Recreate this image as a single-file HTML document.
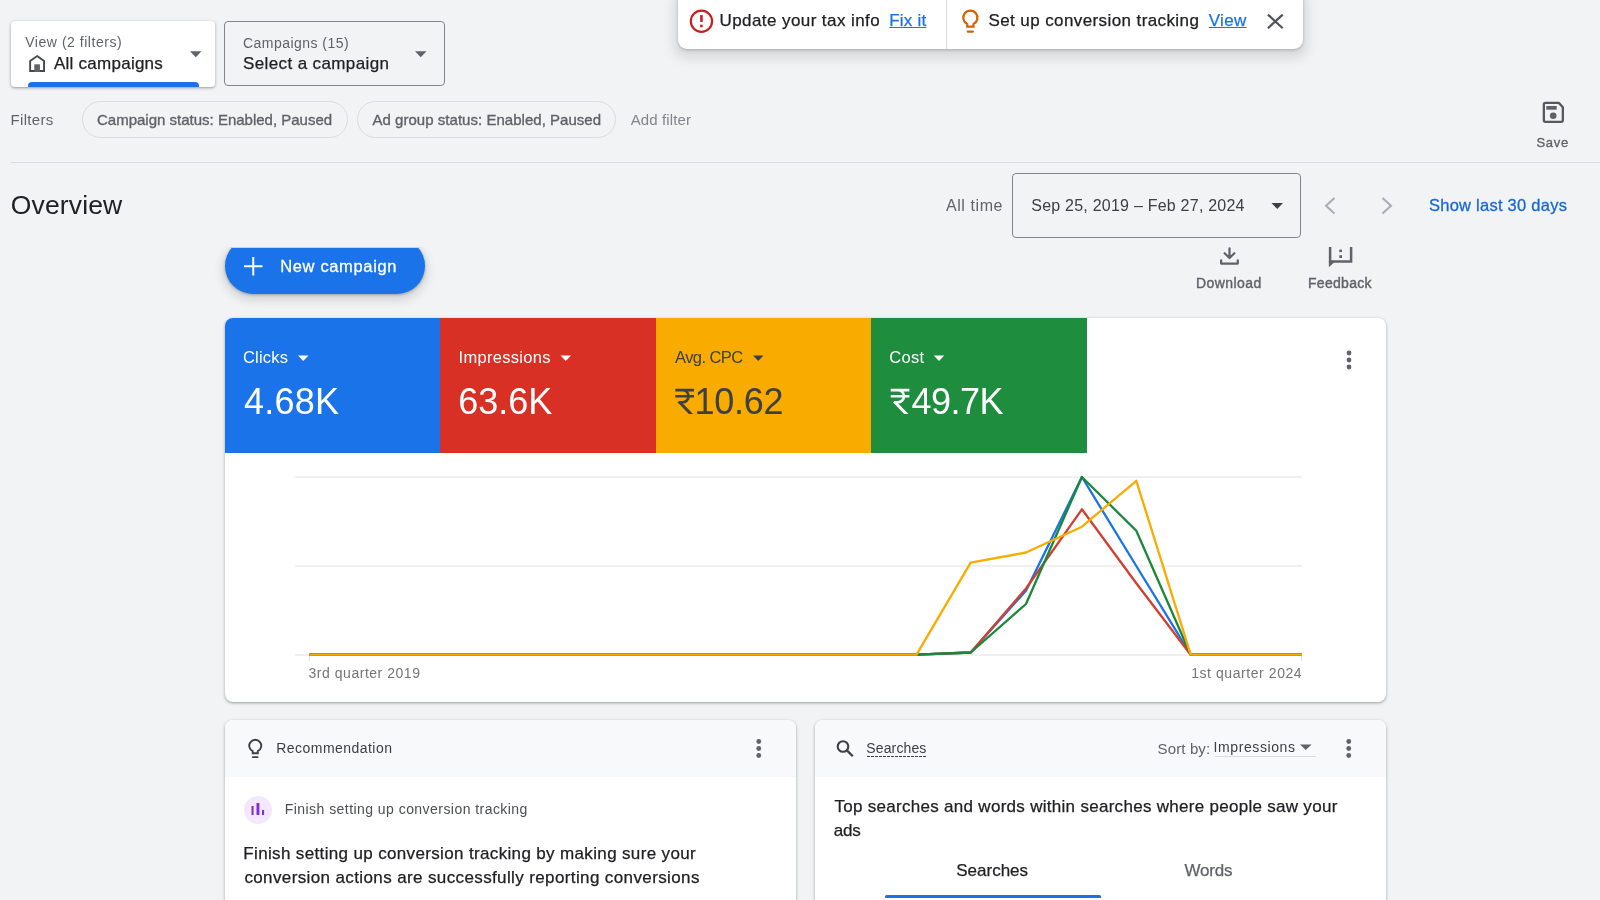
<!DOCTYPE html>
<html><head><meta charset="utf-8">
<style>
*{box-sizing:border-box;margin:0;padding:0}
html,body{width:1600px;height:900px;overflow:hidden;background:#f1f3f4;font-family:"Liberation Sans",sans-serif;color:#202124}
.a{position:absolute;white-space:nowrap;line-height:1}
.tx{position:absolute;left:0;top:0;width:1600px;height:900px;will-change:transform}
svg{position:absolute;left:0;top:0;overflow:visible}
.card{background:#fff;border-radius:8px;box-shadow:0 1px 2px rgba(60,64,67,.3),0 1px 3px 1px rgba(60,64,67,.15);overflow:hidden}
</style></head><body>

<!-- view selector -->
<div class="a" style="left:11px;top:21px;width:204px;height:65.600px;background:#fff;border-radius:4px;box-shadow:0 1px 2px rgba(60,64,67,.3),0 1px 3px 1px rgba(60,64,67,.15);overflow:hidden">
  <div class="a" style="left:16.5px;top:61px;width:171px;height:8px;background:#1a73e8;border-radius:4px 4px 0 0"></div>
</div>
<!-- campaign selector -->
<div class="a" style="left:224.200px;top:21.200px;width:221px;height:65px;border:1px solid #80868b;border-radius:4px"></div>

<!-- notification bar -->
<div class="a" style="left:677.5px;top:-10px;width:625.5px;height:59px;background:#fff;border-radius:9px;box-shadow:0 1px 3px rgba(60,64,67,.3),0 5px 12px 4px rgba(60,64,67,.15)"></div>
<div class="a" style="left:946px;top:0;width:1px;height:49px;background:#dadce0"></div>

<!-- filters -->
<div class="a" style="left:81.5px;top:101px;width:266.5px;height:36.5px;border:1px solid #dadce0;border-radius:18.5px"></div>
<div class="a" style="left:357px;top:101px;width:258.5px;height:36.5px;border:1px solid #dadce0;border-radius:18.5px"></div>
<div class="a" style="left:11px;top:161.5px;width:1589px;height:1px;background:#dadce0"></div>

<!-- date box -->
<div class="a" style="left:1012.200px;top:172.500px;width:289.300px;height:65px;border:1px solid #80868b;border-radius:4px"></div>

<!-- new campaign button (clipped) -->
<div class="a" style="left:205px;top:247px;width:260px;height:70px;overflow:hidden">
  <div class="a" style="left:19.5px;top:-9.500px;width:200px;height:56px;border-radius:28px;background:#1a73e8;box-shadow:0 1px 3px rgba(60,64,67,.4),0 4px 8px 3px rgba(60,64,67,.15)"></div>
</div>

<div class="a" style="left:231.500px;top:247px;width:186px;height:1px;background:rgba(255,255,255,.7)"></div>
<!-- main card -->
<div class="a card" style="left:225px;top:318px;width:1160.700px;height:383.500px">
  <div class="a" style="left:0;top:0;width:215px;height:135px;background:#1a73e8"></div>
  <div class="a" style="left:215px;top:0;width:215.5px;height:135px;background:#d93025"></div>
  <div class="a" style="left:430.5px;top:0;width:215.5px;height:135px;background:#f9ab00"></div>
  <div class="a" style="left:646px;top:0;width:215.5px;height:135px;background:#1e8e3e"></div>
</div>

<!-- recommendation card -->
<div class="a card" style="left:225px;top:720px;width:570.800px;height:200px">
  <div class="a" style="left:0;top:0;width:572px;height:56.5px;background:#f8f9fa"></div>
</div>
<div class="a" style="left:243.5px;top:795.5px;width:28px;height:28px;border-radius:14px;background:#f3e8fd"></div>

<!-- searches card -->
<div class="a card" style="left:815px;top:720px;width:570.700px;height:200px">
  <div class="a" style="left:0;top:0;width:572px;height:56.5px;background:#f8f9fa"></div>
  <div class="a" style="left:70px;top:175px;width:215.500px;height:3px;background:#1a73e8;border-radius:1.5px 1.5px 0 0"></div>
</div>
<div class="a" style="left:867px;top:755.5px;width:60px;height:1px;background:repeating-linear-gradient(90deg,#3c4043 0 3px,transparent 3px 4px)"></div>
<div class="a" style="left:1214.5px;top:756px;width:101.5px;height:1px;background:#dadce0"></div>

<!-- all vector icons + chart -->
<svg width="1600" height="900" viewBox="0 0 1600 900">
  <!-- dropdown arrows -->
  <g fill="#5f6368">
    <path d="M190 51.200h11.500l-5.750 6z"/>
    <path d="M415 51.200h11.500l-5.750 6z"/>
    <path d="M1271.500 203h11.500l-5.750 6z" fill="#3c4043"/>
    <path d="M1300 744.500h11.500l-5.750 5.600z" fill="#5f6368"/>
  </g>
  <g fill="#fff">
    <path d="M298 355.500h10.500l-5.250 5.500z"/>
    <path d="M560.500 355.500h10.500l-5.250 5.500z"/>
    <path d="M753 355.500h10.500l-5.250 5.500z" fill="#3c4043"/>
    <path d="M933.750 355.500h10.500l-5.250 5.500z"/>
  </g>
  <!-- home icon -->
  <path d="M37.100 56.100L44.050 61.050V71.050H30.150V61.050Z" fill="none" stroke="#45484c" stroke-width="1.900"/>
  <rect x="34.300" y="64.300" width="5.600" height="7.700" fill="#5f6368"/>
  <!-- error icon -->
  <circle cx="701.450" cy="21.200" r="10.600" fill="none" stroke="#c5221f" stroke-width="2.200"/>
  <rect x="700.150" y="15.100" width="2.600" height="6.800" fill="#c5221f"/>
  <rect x="700.150" y="24.700" width="2.600" height="2.500" fill="#c5221f"/>
  <!-- orange bulb -->
  <path d="M967.200 26.700V24.060A7.100 7.100 0 1 1 973.500 24.060V26.700Z" fill="none" stroke="#d76200" stroke-width="2.200" stroke-linejoin="miter"/>
  <rect x="966.700" y="30.400" width="7.300" height="2.400" rx="1.200" fill="#d76200"/>
  <!-- close X -->
  <path d="M1267.900 14.600L1282.700 28.200M1282.700 14.600L1267.900 28.200" stroke="#50545a" stroke-width="2.200" fill="none"/>
  <!-- save icon -->
  <path d="M1545.350 102.850H1558.800L1562.850 107.200V120.350A1.500 1.500 0 0 1 1561.350 121.850H1545.350A1.500 1.500 0 0 1 1543.850 120.350V104.350A1.500 1.500 0 0 1 1545.350 102.850Z" fill="none" stroke="#55595e" stroke-width="2.300" stroke-linejoin="round"/>
  <rect x="1546.300" y="106" width="10.400" height="3.700" fill="#5f6368"/>
  <circle cx="1553.200" cy="115.800" r="3.300" fill="#5f6368"/>
  <!-- chevrons -->
  <path d="M1334.500 198L1326 205.750L1334.500 213.500" stroke="#a8acb1" stroke-width="2" fill="none"/>
  <path d="M1382.500 198L1391 205.750L1382.500 213.500" stroke="#a8acb1" stroke-width="2" fill="none"/>
  <!-- plus -->
  <path d="M253.250 257V275.500M244 266.250H262.500" stroke="#fff" stroke-width="2" fill="none"/>
  <!-- download -->
  <path d="M1229.500 248.400V257.500M1224.600 253.200L1229.500 258L1234.400 253.200M1221.100 260.300V263.600H1237.800V260.300" stroke="#5f6368" stroke-width="2.200" fill="none" stroke-linecap="round" stroke-linejoin="round"/>
  <!-- feedback -->
  <path d="M1330.100 247V261.500H1351.100V247" stroke="#5f6368" stroke-width="2.500" fill="none"/>
  <path d="M1328.850 261V267.200L1334.500 262Z" fill="#5f6368"/>
  <rect x="1339.300" y="249.600" width="2.700" height="2.500" fill="#5f6368"/>
  <rect x="1339.300" y="255.200" width="2.700" height="2.800" fill="#5f6368"/>
  <!-- kebabs -->
  <g fill="#5f6368">
    <circle cx="1349" cy="353" r="2.400"/><circle cx="1349" cy="360" r="2.400"/><circle cx="1349" cy="367" r="2.400"/>
    <circle cx="758.750" cy="741.500" r="2.400"/><circle cx="758.750" cy="748.500" r="2.400"/><circle cx="758.750" cy="755.500" r="2.400"/>
    <circle cx="1348.750" cy="741.500" r="2.400"/><circle cx="1348.750" cy="748.500" r="2.400"/><circle cx="1348.750" cy="755.500" r="2.400"/>
  </g>
  <!-- rupee glyphs -->
  <g fill="none" stroke="#3c4043" stroke-width="2.600">
    <path d="M675.300 390.100H694M675.300 396.200H694M680 390.100H682.500A6.100 6.100 0 0 1 682.500 402.300H678.500"/>
    <path d="M677.400 402L681.400 402L693 414L688.800 414Z" fill="#3c4043" stroke="none"/>
  </g>
  <g fill="none" stroke="#fff" stroke-width="2.600" transform="translate(215.400 0)">
    <path d="M675.300 390.100H694M675.300 396.200H694M680 390.100H682.500A6.100 6.100 0 0 1 682.500 402.300H678.500"/>
    <path d="M677.400 402L681.400 402L693 414L688.800 414Z" fill="#fff" stroke="none"/>
  </g>
  <!-- chart -->
  <path d="M295.250 477H1302M295.250 566H1302M295.250 655H1302" stroke="#e2e2e2" stroke-width="1.100"/>
  <path d="M309.250 655V661M1301.500 655V661" stroke="#e0e0e0" stroke-width="1"/>
  <g fill="none" stroke-width="2.300" stroke-linejoin="round">
    <path stroke="#1a73e8" d="M309.250 654.700H916.500L970.700 652.500L1026 590.700L1081.900 477L1136.300 566L1190.700 654.700H1302"/>
    <path stroke="#d23f31" d="M309.250 654.700H916.500L970.700 652.500L1026 588.500L1081.900 509.300L1136.300 583.200L1190.700 654.700H1302"/>
    <path stroke="#1b873b" d="M309.250 654.700H916.500L970.700 652.500L1026 604L1081.900 477L1136.300 530.700L1190.700 654.700H1302"/>
    <path stroke="#f9ab00" d="M309.250 654.700H916.500L970.700 562.700L1026 552.500L1081.900 526.700L1136.300 480.800L1190.700 654.700H1302"/>
  </g>
  <!-- rec bulb -->
  <path d="M252.700 753.300V751.200A6 6 0 1 1 257.800 751.200V753.300Z" fill="none" stroke="#3c4043" stroke-width="1.900"/>
  <rect x="252" y="756.200" width="6.500" height="1.900" rx=".9" fill="#3c4043"/>
  <!-- purple bars -->
  <g fill="#8430ce">
    <rect x="251.500" y="806" width="2.100" height="9"/>
    <rect x="256.500" y="803" width="2.900" height="12"/>
    <rect x="262" y="810" width="2.100" height="5"/>
  </g>
  <!-- search icon -->
  <circle cx="843" cy="746.500" r="5.300" fill="none" stroke="#3c4043" stroke-width="2.100"/>
  <path d="M846.900 750.400L852.800 756.300" stroke="#3c4043" stroke-width="2.300"/>
</svg>

<div class="tx">
<div class="a" style="left:25.25px;top:35px;font-size:14px;color:#5f6368;letter-spacing:0.53px">View (2 filters)</div>
<div class="a" style="left:54px;top:55px;font-size:17px;color:#202124;letter-spacing:0.25px;-webkit-text-stroke:0.25px #202124">All campaigns</div>
<div class="a" style="left:243px;top:36px;font-size:14px;color:#5f6368;letter-spacing:0.46px">Campaigns (15)</div>
<div class="a" style="left:243px;top:55px;font-size:17px;color:#202124;letter-spacing:0.38px;-webkit-text-stroke:0.25px #202124">Select a campaign</div>
<div class="a" style="left:719.5px;top:12px;font-size:17px;color:#202124;letter-spacing:0.42px;-webkit-text-stroke:0.25px #202124">Update your tax info</div>
<div class="a" style="left:889.25px;top:12px;font-size:17px;color:#1a73e8;letter-spacing:0.2px;text-decoration:underline;text-underline-offset:1px;-webkit-text-stroke:0.25px #1a73e8">Fix it</div>
<div class="a" style="left:988.5px;top:12px;font-size:17px;color:#202124;letter-spacing:0.4px;-webkit-text-stroke:0.25px #202124">Set up conversion tracking</div>
<div class="a" style="left:1208.75px;top:12px;font-size:17px;color:#1a73e8;letter-spacing:0.33px;text-decoration:underline;text-underline-offset:1px;-webkit-text-stroke:0.25px #1a73e8">View</div>
<div class="a" style="left:10.5px;top:112px;font-size:15px;color:#5f6368;letter-spacing:0.33px">Filters</div>
<div class="a" style="left:97px;top:112px;font-size:15px;color:#5f6368;-webkit-text-stroke:.35px #5f6368">Campaign status: Enabled, Paused</div>
<div class="a" style="left:372.5px;top:112px;font-size:15px;color:#5f6368;letter-spacing:0.03px;-webkit-text-stroke:.35px #5f6368">Ad group status: Enabled, Paused</div>
<div class="a" style="left:630.75px;top:112px;font-size:15px;color:#80868b;letter-spacing:0.11px">Add filter</div>
<div class="a" style="left:1536.5px;top:136px;font-size:13px;color:#5f6368;letter-spacing:0.67px;-webkit-text-stroke:.35px #5f6368">Save</div>
<div class="a" style="left:10.75px;top:192px;font-size:26.5px;color:#202124;letter-spacing:0.14px">Overview</div>
<div class="a" style="left:946px;top:198px;font-size:16px;color:#5f6368;letter-spacing:0.57px">All time</div>
<div class="a" style="left:1031.25px;top:198px;font-size:16px;color:#3c4043;letter-spacing:0.23px">Sep 25, 2019 – Feb 27, 2024</div>
<div class="a" style="left:1429px;top:197px;font-size:16.5px;color:#1967d2;letter-spacing:0.25px;-webkit-text-stroke:.3px #1967d2">Show last 30 days</div>
<div class="a" style="left:280.25px;top:258px;font-size:16.5px;color:#fff;letter-spacing:0.64px;-webkit-text-stroke:.3px #fff">New campaign</div>
<div class="a" style="left:1196px;top:276px;font-size:14px;color:#5f6368;letter-spacing:0.43px;-webkit-text-stroke:.4px #5f6368">Download</div>
<div class="a" style="left:1308px;top:276px;font-size:14px;color:#5f6368;letter-spacing:0.29px;-webkit-text-stroke:.4px #5f6368">Feedback</div>
<div class="a" style="left:243px;top:349px;font-size:16.5px;color:#fff;letter-spacing:0.2px">Clicks</div>
<div class="a" style="left:244px;top:384px;font-size:36px;color:#fff;letter-spacing:0.25px">4.68K</div>
<div class="a" style="left:458.5px;top:349px;font-size:16.5px;color:#fff;letter-spacing:0.3px">Impressions</div>
<div class="a" style="left:458.25px;top:384px;font-size:36px;color:#fff">63.6K</div>
<div class="a" style="left:675px;top:349px;font-size:16.5px;color:#3c4043;letter-spacing:-0.57px">Avg. CPC</div>
<div class="a" style="left:694.6px;top:384px;font-size:36px;color:#3c4043;letter-spacing:-0.3px">10.62</div>
<div class="a" style="left:889.25px;top:349px;font-size:16.5px;color:#fff;letter-spacing:0.33px">Cost</div>
<div class="a" style="left:911.5px;top:384px;font-size:36px;color:#fff;letter-spacing:-0.5px">49.7K</div>
<div class="a" style="left:308.5px;top:666px;font-size:14px;color:#757575;letter-spacing:0.53px">3rd quarter 2019</div>
<div class="a" style="left:1191.15px;top:666px;font-size:14px;color:#757575;letter-spacing:0.57px">1st quarter 2024</div>
<div class="a" style="left:276.25px;top:741px;font-size:14px;color:#3c4043;letter-spacing:0.46px">Recommendation</div>
<div class="a" style="left:284.75px;top:802px;font-size:14px;color:#4b4e52;letter-spacing:0.45px">Finish setting up conversion tracking</div>
<div class="a" style="left:243.32px;top:845px;font-size:17px;color:#202124;letter-spacing:0.35px;-webkit-text-stroke:0.25px #202124">Finish setting up conversion tracking by making sure your</div>
<div class="a" style="left:244.4px;top:869px;font-size:17px;color:#202124;letter-spacing:0.38px;-webkit-text-stroke:0.25px #202124">conversion actions are successfully reporting conversions</div>
<div class="a" style="left:866.25px;top:741px;font-size:14px;color:#3c4043;letter-spacing:0.14px">Searches</div>
<div class="a" style="left:1157.5px;top:741px;font-size:15px;color:#5f6368;letter-spacing:0.14px">Sort by:</div>
<div class="a" style="left:1213.5px;top:740px;font-size:14px;color:#3c4043;letter-spacing:0.6px">Impressions</div>
<div class="a" style="left:834.5px;top:798px;font-size:17px;color:#202124;letter-spacing:0.29px;-webkit-text-stroke:0.25px #202124">Top searches and words within searches where people saw your</div>
<div class="a" style="left:833.68px;top:822px;font-size:17px;color:#202124;letter-spacing:-0.15px;-webkit-text-stroke:0.25px #202124">ads</div>
<div class="a" style="left:956.25px;top:862px;font-size:17px;color:#202124;-webkit-text-stroke:0.25px #202124">Searches</div>
<div class="a" style="left:1184.45px;top:862px;font-size:17px;color:#5f6368;letter-spacing:-0.2px;-webkit-text-stroke:0.25px #5f6368">Words</div>
</div>
</body></html>
